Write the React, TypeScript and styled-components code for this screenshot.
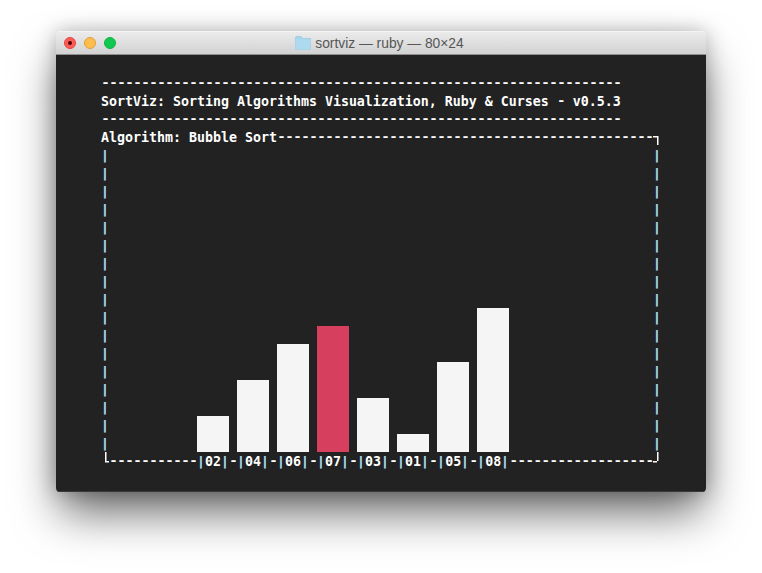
import React from "react";
import styled, { createGlobalStyle } from "styled-components";

const COL = 8;
const ROW = 18;

const dashes = (count: number) => "-".repeat(count);

const GlobalStyle = createGlobalStyle`
  html, body {
    margin: 0;
    padding: 0;
    background: #ffffff;
  }
`;

const Page = styled.div`
  width: 762px;
  height: 573px;
  padding: 31px 56px 0;
  box-sizing: border-box;
  overflow: hidden;
`;

const Window = styled.div`
  width: 650px;
  height: 461px;
  border-radius: 5px 5px 4px 4px;
  overflow: hidden;
  box-shadow: 0 24px 46px -4px rgba(0, 0, 0, 0.6), 0 0 20px rgba(0, 0, 0, 0.25);
`;

const TitleBar = styled.div`
  position: relative;
  display: flex;
  align-items: center;
  justify-content: center;
  height: 24px;
  box-sizing: border-box;
  border-top: 1px solid #f4f4f4;
  border-bottom: 1px solid #8f8f8f;
  background: linear-gradient(#ebebeb, #d2d2d2);
`;

const Lights = styled.div`
  position: absolute;
  left: 8px;
  top: 5px;
  display: flex;
  gap: 8px;
`;

const Light = styled.span<{ $color: string; $edge: string }>`
  display: flex;
  align-items: center;
  justify-content: center;
  width: 12px;
  height: 12px;
  box-sizing: border-box;
  border-radius: 50%;
  background: ${(p) => p.$color};
  border: 1px solid ${(p) => p.$edge};
`;

const LightDot = styled.span`
  width: 4px;
  height: 4px;
  border-radius: 50%;
  background: #4d0000;
`;

const WindowTitle = styled.div`
  display: flex;
  align-items: center;
  gap: 4px;
  margin-left: -3px;
  font-family: "Liberation Sans", Arial, sans-serif;
  font-size: 13.8px;
  color: #565656;
  white-space: pre;
`;

const Terminal = styled.div`
  height: 437px;
  padding: 1px 0 0 5px;
  box-sizing: border-box;
  background: #222222;
  border-bottom: 1px solid #3a3a3a;
  color: #ffffff;
  font-family: "DejaVu Sans Mono", "Liberation Mono", monospace;
  font-size: 13.29px;
  font-weight: 700;
  line-height: 20px;
`;

const Row = styled.div<{ $indent?: number }>`
  display: flex;
  height: ${ROW}px;
  padding-left: ${(p) => (p.$indent ?? 0) * COL}px;
  white-space: pre;
`;

// a wider hyphen squeezed back on the grid gives the 6px dash and 2px gap of the terminal
const Dashes = styled.span`
  font-family: "Liberation Mono", monospace;
  font-size: 15px;
  letter-spacing: -1px;
`;

const Corner = styled.span<{ $side: "top-right" | "bottom-left" | "bottom-right" }>`
  display: block;
  width: ${COL}px;
  height: ${ROW}px;
  background-repeat: no-repeat;
  background-image: linear-gradient(#fff, #fff), linear-gradient(#fff, #fff);
  background-size: 4px 1.5px, 1.5px 9px;
  ${(p) =>
    p.$side === "top-right"
      ? `background-position: 0 8px, 4px 8px;`
      : p.$side === "bottom-left"
      ? `background-position: 4px 8.5px, 4px 0;`
      : `background-position: 0 8.5px, 4px 0;`}
`;

const Pipe = styled.span`
  display: inline-block;
  width: ${COL}px;
  height: ${ROW}px;
  font-size: 12px;
  text-align: center;
  color: #9fd6f3;
  text-shadow: -0.5px 0 0 rgba(190, 228, 248, 0.7);
`;

const Middle = styled.div`
  display: flex;
  height: ${17 * ROW}px;
  padding-left: ${5 * COL}px;
`;

const Side = styled.div`
  display: flex;
  flex-direction: column;
  width: ${COL}px;
`;

const Plot = styled.div`
  display: flex;
  align-items: flex-end;
  gap: ${COL}px;
  width: ${68 * COL}px;
  padding-left: ${11 * COL}px;
  box-sizing: border-box;
`;

const Bar = styled.div<{ $active?: boolean; $value: number }>`
  width: ${4 * COL}px;
  height: ${(p) => p.$value * ROW}px;
  background: ${(p) => (p.$active ? "#d63f5e" : "#f5f5f5")};
`;

const values = [2, 4, 6, 7, 3, 1, 5, 8];
const ACTIVE = 7;

const FolderIcon = () => (
  <svg width="16" height="14" viewBox="0 0 16 14">
    <path d="M0.5 2 Q0.5 0.5 2 0.5 H6 L7.5 2.5 H15.5 V13.5 H0.5 Z" fill="#a6d6ee" stroke="#92c4de" strokeWidth="0.6" />
    <rect x="0.5" y="3.5" width="15" height="10" fill="#aedaf0" />
  </svg>
);

export default function App() {
  const sideRows = Array.from({ length: 17 });

  return (
    <Page>
      <GlobalStyle />
      <Window>
        <TitleBar>
          <Lights>
            <Light $color="#fc5b57" $edge="#e14640">
              <LightDot />
            </Light>
            <Light $color="#ffbd4c" $edge="#e0a13a" />
            <Light $color="#0fc84f" $edge="#10b343" />
          </Lights>
          <WindowTitle>
            <FolderIcon />
            sortviz — ruby — 80×24
          </WindowTitle>
        </TitleBar>
        <Terminal>
          <Row />
          <Row $indent={5}>
            <Dashes>{dashes(65)}</Dashes>
          </Row>
          <Row $indent={5}>
            SortViz: Sorting Algorithms Visualization, Ruby &amp; Curses <Dashes>-</Dashes> v0.5.3
          </Row>
          <Row $indent={5}>
            <Dashes>{dashes(65)}</Dashes>
          </Row>
          <Row $indent={5}>
            Algorithm: Bubble Sort<Dashes>{dashes(47)}</Dashes>
            <Corner $side="top-right" />
          </Row>
          <Middle>
            <Side>
              {sideRows.map((_, i) => (
                <Pipe key={i}>|</Pipe>
              ))}
            </Side>
            <Plot>
              {values.map((value) => (
                <Bar key={value} $value={value} $active={value === ACTIVE} />
              ))}
            </Plot>
            <Side>
              {sideRows.map((_, i) => (
                <Pipe key={i}>|</Pipe>
              ))}
            </Side>
          </Middle>
          <Row $indent={5}>
            <Corner $side="bottom-left" />
            <Dashes>{dashes(11)}</Dashes>
            {values.map((value, i) => (
              <React.Fragment key={value}>
                {i > 0 && <Dashes>-</Dashes>}
                <Pipe>|</Pipe>0{value}
                <Pipe>|</Pipe>
              </React.Fragment>
            ))}
            <Dashes>{dashes(18)}</Dashes>
            <Corner $side="bottom-right" />
          </Row>
        </Terminal>
      </Window>
    </Page>
  );
}
